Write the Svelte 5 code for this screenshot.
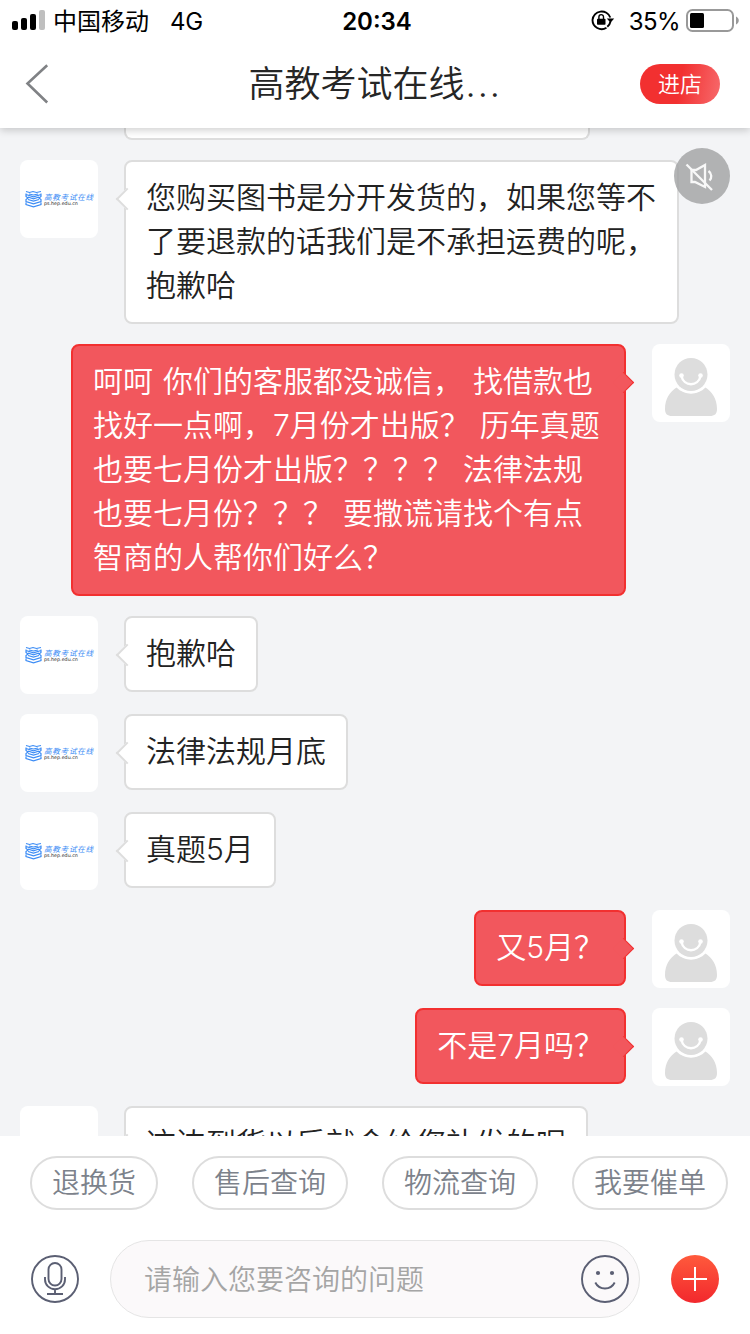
<script>
  const messages = [
    { from: 'shop', lines: ['您购买图书是分开发货的，如果您等不', '了要退款的话我们是不承担运费的呢，', '抱歉哈'], wide: true },
    {
      from: 'me',
      lines: [
        '呵呵 你们的客服都没诚信， 找借款也',
        '找好一点啊，7月份才出版？ 历年真题',
        '也要七月份才出版？？？？ 法律法规',
        '也要七月份？？？ 要撒谎请找个有点',
        '智商的人帮你们好么？'
      ],
      wide: true
    },
    { from: 'shop', lines: ['抱歉哈'] },
    { from: 'shop', lines: ['法律法规月底'] },
    { from: 'shop', lines: ['真题5月'] },
    { from: 'me', lines: ['又5月？'] },
    { from: 'me', lines: ['不是7月吗？'] },
    { from: 'shop', lines: ['这边到货以后就会给您补发的呢'], cut: true }
  ];
  const chips = ['退换货', '售后查询', '物流查询', '我要催单'];
</script>

<div class="screen">
  <header>
    <div class="status">
      <div class="side">
        <svg class="signal" width="34" height="22" viewBox="0 0 34 22">
          <rect x="0" y="12" width="6" height="9" rx="2" />
          <rect x="9" y="9" width="6" height="12" rx="2" />
          <rect x="18" y="5" width="6" height="16" rx="2" />
          <rect x="27" y="1" width="6" height="20" rx="2" fill="#bfbfbf" />
        </svg>
        <span class="carrier">中国移动</span>
        <span class="net">4G</span>
      </div>
      <span class="time">20:34</span>
      <div class="side right">
        <svg class="lock" width="24" height="22" viewBox="0 0 24 22">
          <path d="M19.300 8.500A9.200 9.200 0 0 0 1.500 11A9.200 9.200 0 0 0 15.500 18.800" fill="none" stroke="#000" stroke-width="1.900" />
          <path d="M16.300 17.800A9.200 9.200 0 0 0 19.500 12.500" fill="none" stroke="#000" stroke-width="1.900" />
          <path d="M15.800 9.600h7.400l-3.700 4.200z" />
          <rect x="6" y="9.700" width="8.500" height="6" rx=".8" />
          <path d="M7.900 10.200V7.900a2.300 2.300 0 0 1 4.600 0v2.300" fill="none" stroke="#000" stroke-width="1.400" />
        </svg>
        <span class="pct">35%</span>
        <svg class="battery" width="54" height="24" viewBox="0 0 54 24">
          <rect x="1" y="2" width="46" height="21" rx="5.500" fill="none" stroke="#999" stroke-width="2" />
          <rect x="4" y="5" width="14" height="15" rx="1.500" />
          <path d="M50 8.500c3.700 1.500 3.700 6.500 0 8z" fill="#999" />
        </svg>
      </div>
    </div>
    <div class="nav">
      <svg class="back" width="24" height="42" viewBox="0 0 24 42">
        <path d="M22.200 2.200L2.500 20.500L22.200 39.500" fill="none" stroke="#808285" stroke-width="2.600" />
      </svg>
      <h1>高教考试在线<span>...</span></h1>
      <button class="enter">进店</button>
    </div>
  </header>

  <main>
    <div class="previous"></div>
    {#each messages as m}
      <div class="row {m.from}">
        <div class="avatar">
          {#if m.from === 'me'}
            <svg width="78" height="78" viewBox="0 0 78 78">
              <path d="M13 65c0-10 5-17.500 11.500-21.500 8 8 21 8 29 0C60 47.500 65 55 65 65c0 5-2.500 7-7 7H20c-4.500 0-7-2-7-7z" fill="#ddd" />
              <circle cx="39" cy="31" r="18.500" fill="#fff" />
              <circle cx="39" cy="30.500" r="16.500" fill="#ddd" />
              <path d="M29.500 32c2 11 17 11 19 0" fill="none" stroke="#fff" stroke-width="2.400" />
              <circle cx="29.500" cy="31.500" r="2.300" fill="#fff" />
              <circle cx="48.500" cy="31.500" r="2.300" fill="#fff" />
            </svg>
          {:else if !m.cut}
            <svg width="17" height="18" viewBox="0 0 17 18" fill="none" stroke="#3c8cf5" stroke-width="1.200">
              <path d="M1 1.500l3.500 1L8 1.500l3.500 1L16 1.500M4 4l4.500 1L13 4M1 4.500l7.500 2.300L16 4.500M3 7l5.500 1.800L14 7M1 3.500v3l2 1.500-2 1.500v2l7.500 2.300 7.500-2.300v-2L14 8l2-1.500v-3M3 9.500l5.500 1.600L14 9.500M1 12.500v2l7.500 2.300 7.500-2.300v-2" />
            </svg>
            <div class="brand"><b>高教考试在线</b><i>ps.hep.edu.cn</i></div>
          {/if}
        </div>
        <div class="bubble" class:wide={m.wide}>
          {#each m.lines as line}<p>{line}</p>{/each}
        </div>
      </div>
    {/each}
    <button class="mute" aria-label="静音">
      <svg width="28" height="30" viewBox="0 0 28 30" fill="none" stroke="#f8f8f8" stroke-width="2.300">
        <path d="M6.500 9v12h3.500L20 26V4l-9 5z" />
        <path d="M1.500 3.500l25.500 25.500" />
        <path d="M23.500 10c3.500 2.500 3.500 7 1 9.500" />
      </svg>
    </button>
  </main>

  <footer>
    <div class="chips">
      {#each chips as c}<button>{c}</button>{/each}
    </div>
    <div class="compose">
      <svg width="48" height="48" viewBox="0 0 48 48" fill="none" stroke="#5b5f73" stroke-width="1.900">
        <circle cx="24" cy="24" r="23" />
        <rect x="17.500" y="8" width="13" height="22.500" rx="6.500" />
        <path d="M14 22v2.500a10 9.700 0 0 0 20 0V22M24 34.500v4.500M16 39h16" />
      </svg>
      <div class="field">
        <span>请输入您要咨询的问题</span>
        <svg width="48" height="48" viewBox="0 0 48 48" fill="none" stroke="#5b5f73" stroke-width="1.900">
          <circle cx="24" cy="24" r="23" />
          <circle cx="17" cy="18" r="2.100" fill="#5b5f73" stroke="none" />
          <circle cx="31" cy="18" r="2.100" fill="#5b5f73" stroke="none" />
          <path d="M14.300 27.500c4 8 15.400 8 19.400 0" />
        </svg>
      </div>
      <svg width="48" height="48" viewBox="0 0 48 48">
        <defs>
          <linearGradient id="plus" x1="0" y1="0" x2="0" y2="1">
            <stop offset="0" stop-color="#ff5a3c" />
            <stop offset="1" stop-color="#f2282d" />
          </linearGradient>
        </defs>
        <circle cx="24" cy="24" r="24" fill="url(#plus)" />
        <path d="M12 24h24M24 12v24" stroke="#fff" stroke-width="2" />
      </svg>
    </div>
  </footer>
</div>

<style>
  :global(body) { background: #fff; }
  * { box-sizing: border-box; }
  .screen {
    width: 750px;
    height: 1334px;
    display: flex;
    flex-direction: column;
    overflow: hidden;
    background: #fff;
    font-family: Inter, "Noto Sans CJK SC", sans-serif;
    font-weight: 350;
  }
  button { font: inherit; margin: 0; padding: 0; border: 0; }
  svg { display: block; flex: none; }
  header {
    height: 128px;
    flex: none;
    background: #fff;
    box-shadow: 0 2px 8px rgba(0, 0, 0, .2);
    z-index: 2;
  }
  .status {
    height: 40px;
    display: grid;
    grid-template-columns: 1fr auto 1fr;
    align-items: center;
    padding: 0 10px 0 12px;
    font-size: 24px;
    font-weight: 400;
    line-height: 36px;
    color: #000;
  }
  .side { display: flex; align-items: center; }
  .status span { padding-top: 3px; }
  .right { justify-content: flex-end; }
  .carrier { margin-left: 7px; }
  .net { margin-left: 21px; letter-spacing: -.3px; }
  .time { font-weight: 600; padding-left: 2px; }
  .lock { margin-right: 14px; }
  .pct { margin-right: 6px; letter-spacing: -.6px; }
  .nav {
    height: 88px;
    display: grid;
    grid-template-columns: 1fr auto 1fr;
    align-items: center;
    padding: 0 30px 0 25px;
  }
  h1 { margin: 0 0 0 3px; font-size: 36px; font-weight: 350; line-height: 88px; color: #262626; display: flex; }
  h1 span { letter-spacing: 2px; margin-left: 1px; width: 34px; }
  .enter {
    justify-self: end;
    width: 80px;
    height: 40px;
    border-radius: 20px;
    background: linear-gradient(100deg, #f23030 50%, #f76a6c);
    color: #fff;
    font-size: 22px;
    line-height: 40px;
  }
  main {
    position: relative;
    height: 1008px;
    flex: none;
    overflow: hidden;
    background: #f3f4f6;
    display: flex;
    flex-direction: column;
    gap: 20px;
  }
  .previous {
    width: 466px;
    height: 12px;
    flex: none;
    margin-left: 124px;
    border: 2px solid #ddd;
    border-top: 0;
    border-radius: 0 0 8px 8px;
    background: #fff;
  }
  .row { display: flex; align-items: flex-start; gap: 26px; padding: 0 20px; flex: none; }
  .me { flex-direction: row-reverse; }
  .avatar {
    width: 78px;
    height: 78px;
    flex: none;
    display: flex;
    align-items: center;
    gap: 2px;
    border-radius: 8px;
    background: #fff;
  }
  .shop .avatar { padding-left: 5px; }
  .brand { display: flex; flex-direction: column; white-space: nowrap; }
  .brand b { font: italic 400 7.600px/9px "Noto Sans CJK SC", sans-serif; letter-spacing: .7px; color: #3c8cf5; }
  .brand i { font: normal 4.800px/6px "DejaVu Sans", sans-serif; color: #222; }
  .bubble {
    position: relative;
    padding: 13px 20px 15px;
    border: 2px solid #ddd;
    border-radius: 8px;
    background: #fff;
    color: #222;
    font-size: 30px;
    word-spacing: 1.600px;
  }
  .wide { width: 555px; }
  .bubble p { margin: 0; height: 44px; line-height: 44px; white-space: pre; }
  .me .bubble { background: #f2575d; border-color: #f23030; color: #fff; }
  .bubble::before {
    content: "";
    position: absolute;
    top: 29px;
    left: -7px;
    width: 14px;
    height: 14px;
    background: #fff;
    border: solid #ddd;
    border-width: 0 0 2px 2px;
    transform: rotate(45deg);
  }
  .me .bubble::before {
    left: auto;
    right: -7px;
    background: #f2575d;
    border-color: #f23030;
    border-width: 1px 1px 0 0;
  }
  .mute {
    position: absolute;
    left: 674px;
    top: 20px;
    width: 56px;
    height: 56px;
    border-radius: 50%;
    background: rgba(160, 161, 163, .8);
    padding-left: 11px;
  }
  footer { flex: 1; background: #fff; padding-top: 20px; }
  .chips { display: flex; gap: 34px; padding-left: 30px; }
  .chips button {
    height: 54px;
    padding: 0 20px;
    border: 2px solid #ddd;
    border-radius: 27px;
    background: #fff;
    color: #7c828b;
    font-size: 28px;
    line-height: 50px;
  }
  .compose { display: flex; align-items: center; gap: 31px; padding: 30px 31px 0; }
  .field {
    width: 530px;
    height: 78px;
    display: flex;
    align-items: center;
    justify-content: space-between;
    padding: 0 10px 0 33px;
    border: 1px solid #e5e5e5;
    border-radius: 39px;
    background: #fbf9fa;
    color: #a5a5a5;
    font-size: 28px;
  }
  .field span { padding-bottom: 2px; }
</style>
